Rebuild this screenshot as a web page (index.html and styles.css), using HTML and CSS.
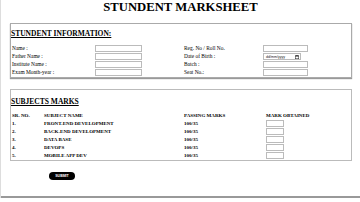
FILE: index.html
```html
<!DOCTYPE html>
<html lang="en">
<head>
<meta charset="utf-8">
<title>Student Marksheet</title>
<link rel="stylesheet" href="styles.css">
</head>
<body>
<h1>STUNDENT MARKSHEET</h1>
<form>
<!-- Student details -->
<div class="box infoBox">
  <h2>STUNDENT INFORMATION:</h2>
  <div class="infoGrid">
    <label>Name :</label><input type="text" class="field">
    <label>Reg. No / Roll No.</label><input type="text" class="field">
    <label>Father Name :</label><input type="text" class="field">
    <label>Date of Birth :</label>
    <div class="field dateField">
      <span>dd/mm/yyyy</span>
      <svg width="4" height="4" viewBox="0 0 8 8"><rect x="0.5" y="1.5" width="7" height="6" fill="none" stroke="#222" stroke-width="1"/><rect x="0.5" y="1.5" width="7" height="1.5" fill="#222"/><rect x="2" y="0" width="1" height="2" fill="#222"/><rect x="5" y="0" width="1" height="2" fill="#222"/></svg>
    </div>
    <label>Institute Name :</label><input type="text" class="field">
    <label>Batch :</label><input type="text" class="field">
    <label>Exam Month-year :</label><input type="text" class="field">
    <label>Seat No.:</label><input type="text" class="field">
  </div>
</div>
<!-- Subject marks -->
<div class="box marksBox">
  <h2>SUBJECTS MARKS</h2>
  <div class="marksGrid">
    <div class="head">SR. NO.</div><div class="head">SUBJECT NAME</div><div class="head">PASSING MARKS</div><div class="head">MARK OBTAINED</div>
    <div class="cell">1.</div><div class="cell">FRONT-END DEVELOPMENT</div><div class="cell">100/35</div><div class="cell"><input type="text" class="markField"></div>
    <div class="cell">2.</div><div class="cell">BACK-END DEVELOPMENT</div><div class="cell">100/35</div><div class="cell"><input type="text" class="markField"></div>
    <div class="cell">3.</div><div class="cell">DATA BASE</div><div class="cell">100/35</div><div class="cell"><input type="text" class="markField"></div>
    <div class="cell">4.</div><div class="cell">DEVOPS</div><div class="cell">100/35</div><div class="cell"><input type="text" class="markField"></div>
    <div class="cell">5.</div><div class="cell">MOBILE APP DEV</div><div class="cell">100/35</div><div class="cell"><input type="text" class="markField"></div>
  </div>
</div>
<div class="submitRow">
  <input type="submit" class="submitBtn" value="SUBMIT">
</div>
</form>
<hr class="footLine">
</body>
</html>
```
FILE: styles.css
```css
body {
  margin: 0;
  font-family: "Liberation Serif", "Times New Roman", serif;
  color: #000;
  background: #fff;
  border-left: 1px solid #ddd;
}
h1 {
  margin: 0;
  padding-top: 1px;
  font-size: 12.7px;
  line-height: 12px;
  text-align: center;
  font-weight: bold;
}
.box {
  margin: 10px 8px 0 9px;
  border: 1px solid #aaa;
  box-shadow: 0 1px 1px #999;
}
.box h2 {
  margin: 0;
  font-size: 7.5px;
  line-height: 9px;
  text-decoration: underline;
  font-weight: bold;
}
.infoBox h2 {
  margin-top: 5px;
}
.infoGrid {
  display: grid;
  grid-template-columns: 83px 47px 42px 79px 45px;
  grid-auto-rows: 8px;
  margin-top: 7px;
  padding-left: 1px;
  font-size: 5.4px;
}
.infoGrid label {
  line-height: 7px;
}
.infoGrid label:nth-of-type(2n) {
  grid-column: 4;
}
.field {
  box-sizing: border-box;
  width: 100%;
  height: 7px;
  margin: 0;
  padding: 0 1px;
  border: 1px solid #bbb;
  border-radius: 0;
  font-size: 4px;
  font-family: inherit;
}
.dateField {
  display: flex;
  align-items: center;
  justify-content: space-between;
  width: 38px;
  padding: 0 1px 0 2px;
  color: #222;
  font-family: "Liberation Sans", Arial, sans-serif;
  font-size: 3.6px;
}
.dateField svg {
  display: block;
}
.marksBox {
  margin-top: 11px;
  box-shadow: none;
  border-color: #bbb;
}
.marksBox h2 {
  margin-top: 7px;
}
.marksGrid {
  display: grid;
  grid-template-columns: 32px 140px 82px 1fr;
  grid-auto-rows: 8px;
  margin-top: 6px;
  padding-left: 1px;
  font-size: 5px;
  font-weight: bold;
}
.head, .cell {
  line-height: 8px;
}
.markField {
  box-sizing: border-box;
  display: block;
  width: 18px;
  height: 7px;
  margin: 0;
  padding: 0;
  border: 1px solid #bbb;
}
.submitRow {
  padding-left: 48px;
  margin-top: 11px;
}
.submitBtn {
  display: block;
  width: 26px;
  height: 8px;
  padding: 0;
  border: none;
  border-radius: 4px;
  background: #000;
  color: #fff;
  font-size: 3.5px;
  font-weight: bold;
  font-family: "Liberation Sans", Arial, sans-serif;
}
.footLine {
  margin: 16px 0 0 0;
  border: none;
  border-top: 2px solid #999;
}
```
